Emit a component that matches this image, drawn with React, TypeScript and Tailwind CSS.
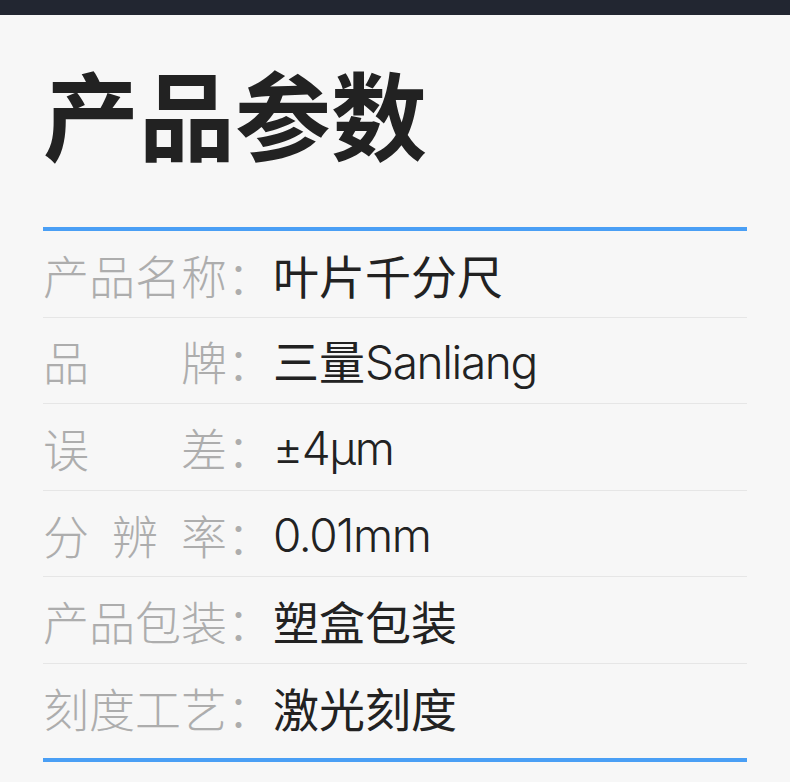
import React from "react";

const rows: { label: string; value: string }[] = [
  { label: "产品名称", value: "叶片千分尺" },
  { label: "品牌", value: "三量Sanliang" },
  { label: "误差", value: "±4μm" },
  { label: "分辨率", value: "0.01mm" },
  { label: "产品包装", value: "塑盒包装" },
  { label: "刻度工艺", value: "激光刻度" },
];

// latin runs get a tighter sans, CJK stays on Noto
function Value({ text }: { text: string }) {
  const parts = text.split(/([\u0000-\u024F\u00B5\u03BC]+)/).filter(Boolean);
  return (
    <span className="text-[#222]">
      {parts.map((p, i) =>
        /^[\u0000-\u024F\u00B5\u03BC]+$/.test(p) ? (
          <span key={i} className="font-['Inter','Noto_Sans_CJK_SC',sans-serif] font-[350] tracking-[-0.03em]">
            {p}
          </span>
        ) : (
          <span key={i}>{p}</span>
        )
      )}
    </span>
  );
}

export default function App() {
  return (
    <div className="min-h-[782px] w-[790px] bg-[#f7f7f7] font-['Noto_Sans_CJK_SC',sans-serif]">
      <div className="h-[15px] bg-[#222631]" />
      <div className="px-[43px]">
        <h1 className="pt-[49px] pb-[67px] text-[96px] font-bold leading-none text-[#222]">
          产品参数
        </h1>
        <div className="border-t-4 border-[#4a9ff5]">
          {rows.map((r, i) => (
            <div
              key={r.label}
              className={
                "flex h-[86.6px] items-center text-[46px] leading-none " +
                (i < rows.length - 1 ? "border-b border-[#e6e6e6]" : "")
              }
            >
              <span className="flex items-center text-[#adadad] font-light">
                <span className="inline-block w-[184px] [text-align-last:justify]">{r.label}</span>
                <span className="w-[46px]">：</span>
              </span>
              <Value text={r.value} />
            </div>
          ))}
        </div>
        <div className="mt-[7px] h-[4px] bg-[#4a9ff5]" />
      </div>
    </div>
  );
}
